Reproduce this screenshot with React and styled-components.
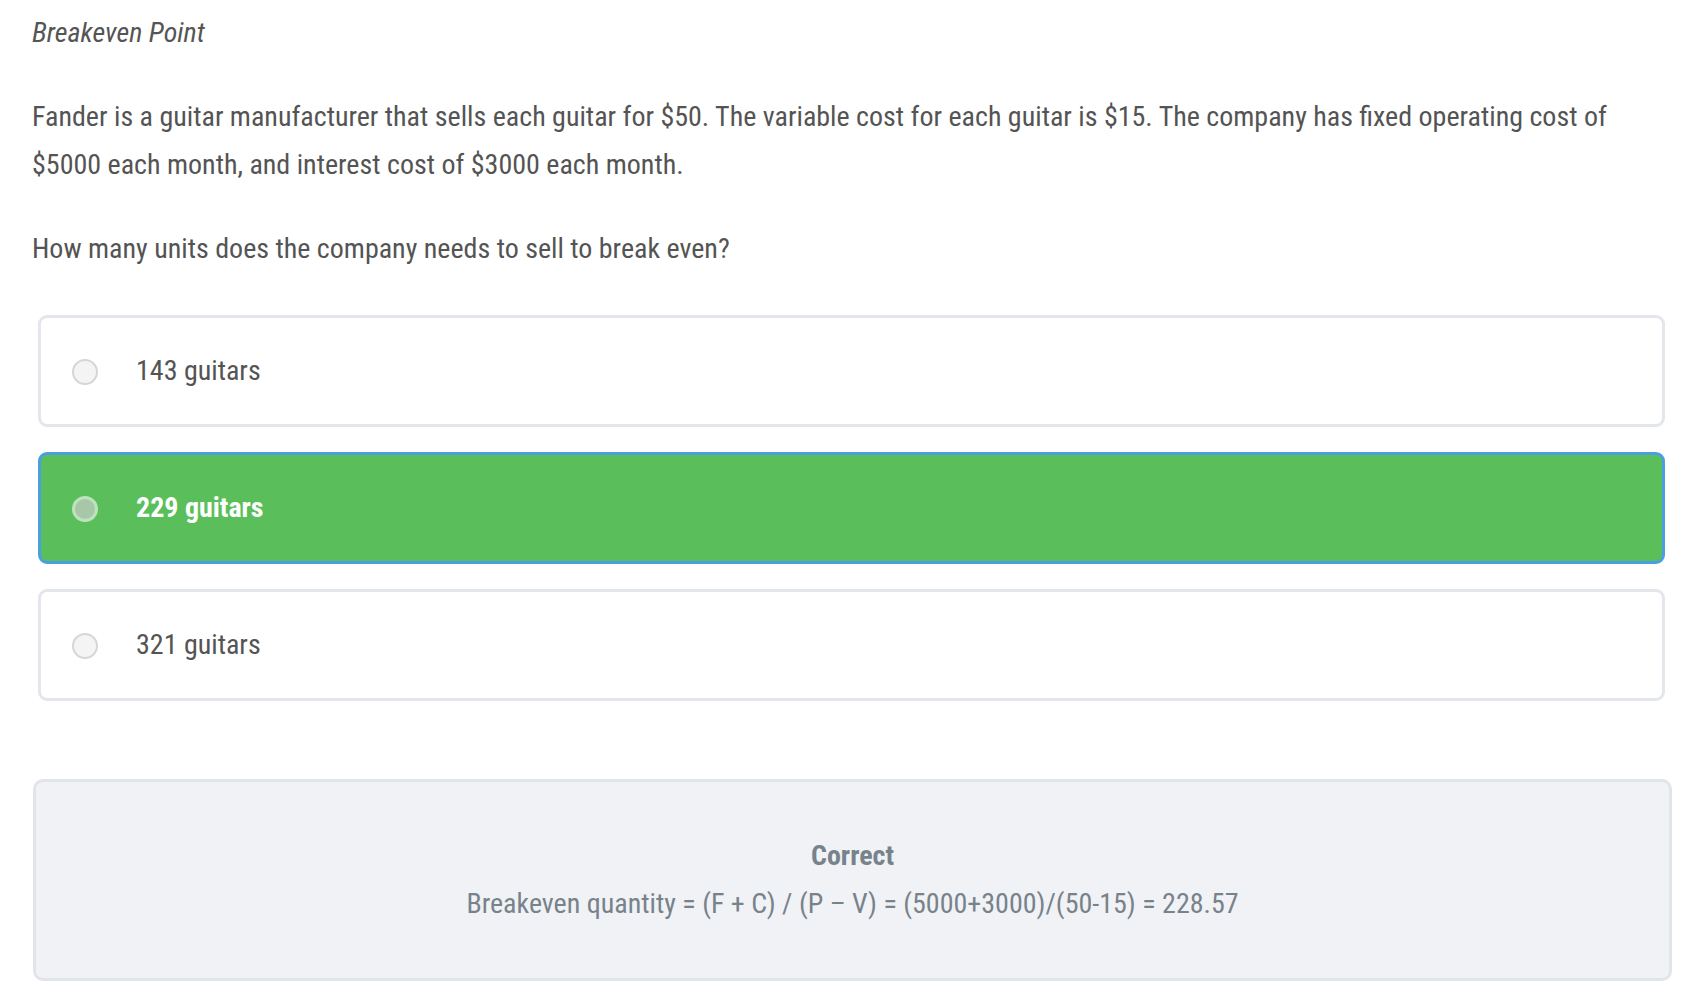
import React from "react";
import styled, { createGlobalStyle } from "styled-components";

const GlobalStyle = createGlobalStyle`
  body {
    margin: 0;
    background: #fff;
    font-family: "Roboto Condensed", "Roboto", "Liberation Sans", sans-serif;
  }
`;

const options = [
  { id: 1, label: "143 guitars" },
  { id: 2, label: "229 guitars", correct: true },
  { id: 3, label: "321 guitars" },
];

const Quiz = () => {
  return (
    <Page>
      <GlobalStyle />
      <Title>Breakeven Point</Title>
      <Text>
        Fander is a guitar manufacturer that sells each guitar for $50. The
        variable cost for each guitar is $15. The company has fixed operating
        cost of $5000 each month, and interest cost of $3000 each month.
      </Text>
      <Question>How many units does the company needs to sell to break even?</Question>
      <OptionList>
        {options.map((o) => (
          <Option key={o.id} $selected={o.correct}>
            <Radio $selected={o.correct} />
            <Label $selected={o.correct}>{o.label}</Label>
          </Option>
        ))}
      </OptionList>
      <Feedback>
        <strong>Correct</strong>
        <span>Breakeven quantity = (F + C) / (P – V) = (5000+3000)/(50-15) = 228.57</span>
      </Feedback>
    </Page>
  );
};

const Page = styled.div`
  padding: 9px 12px 22px 32px;
  color: #545454;
  font-size: 28px;
  line-height: 48px;
`;

const Title = styled.div`
  font-style: italic;
  color: #555;
`;

const Text = styled.p`
  margin: 36px 0 0;
`;

const Question = styled.p`
  margin: 36px 0 0;
`;

const OptionList = styled.div`
  display: flex;
  flex-direction: column;
  gap: 25px;
  margin: 42px 5px 0 6px;
`;

const Option = styled.div`
  display: flex;
  align-items: center;
  gap: 38px;
  height: 112px;
  box-sizing: border-box;
  padding-left: 31px;
  border: 3px solid ${(p) => (p.$selected ? "#4a9fe2" : "#e3e6eb")};
  border-radius: 9px;
  background: ${(p) => (p.$selected ? "#5abf5a" : "#fff")};
`;

const Radio = styled.span`
  width: 26px;
  height: 26px;
  box-sizing: border-box;
  border-radius: 50%;
  flex-shrink: 0;
  margin-top: 2px;
  border: ${(p) => (p.$selected ? "3px solid #bde3bd" : "2px solid #d6d6d6")};
  background: ${(p) => (p.$selected ? "#a8c7a8" : "#f4f4f4")};
`;

const Label = styled.span`
  color: ${(p) => (p.$selected ? "#fff" : "#545454")};
  font-weight: ${(p) => (p.$selected ? 700 : 400)};
`;

const Feedback = styled.div`
  margin: 78px -2px 0 1px;
  height: 202px;
  box-sizing: border-box;
  padding: 50px 20px;
  border: 3px solid #e1e4e9;
  border-radius: 10px;
  background: #f0f2f6;
  color: #78828b;
  display: flex;
  flex-direction: column;
  align-items: center;
  text-align: center;

  strong {
    font-weight: 700;
  }
`;

export default Quiz;
